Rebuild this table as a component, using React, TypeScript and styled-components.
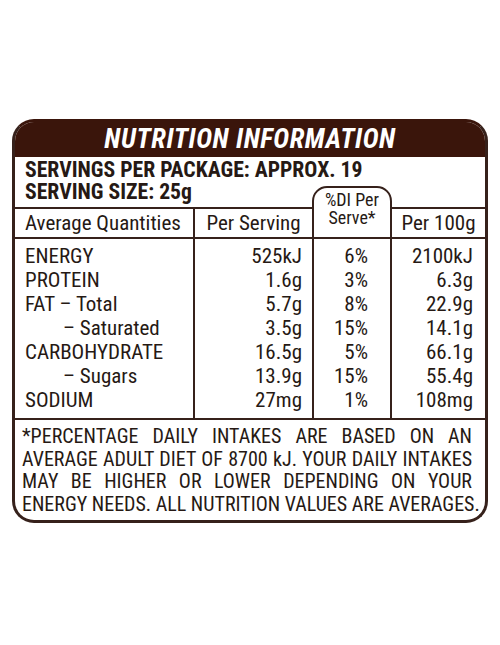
import React from "react";
import styled, { createGlobalStyle } from "styled-components";

const INK = "#261914";
const BROWN = "#3a150b";
const LINE = "#36211b";
const FONT = `Roboto, "Liberation Sans", sans-serif`;

type Nutrient = {
  name: string;
  sub?: boolean;
  serving: string;
  di: string;
  per100: string;
};

const rows: Nutrient[] = [
  { name: "ENERGY", serving: "525kJ", di: "6%", per100: "2100kJ" },
  { name: "PROTEIN", serving: "1.6g", di: "3%", per100: "6.3g" },
  { name: "FAT – Total", serving: "5.7g", di: "8%", per100: "22.9g" },
  { name: "– Saturated", sub: true, serving: "3.5g", di: "15%", per100: "14.1g" },
  { name: "CARBOHYDRATE", serving: "16.5g", di: "5%", per100: "66.1g" },
  { name: "– Sugars", sub: true, serving: "13.9g", di: "15%", per100: "55.4g" },
  { name: "SODIUM", serving: "27mg", di: "1%", per100: "108mg" },
];

const footnote = [
  "*PERCENTAGE DAILY INTAKES ARE BASED ON AN",
  "AVERAGE ADULT DIET OF 8700 kJ. YOUR DAILY INTAKES",
  "MAY BE HIGHER OR LOWER DEPENDING ON YOUR",
  "ENERGY NEEDS. ALL NUTRITION VALUES ARE AVERAGES.",
];

export default function App() {
  return (
    <>
      <GlobalStyle />
      <Page>
        <Label>
          <Header>NUTRITION INFORMATION</Header>
          <Table>
            <Servings>SERVINGS PER PACKAGE: APPROX. 19</Servings>
            <ServingSize>SERVING SIZE: 25g</ServingSize>
            <Bubble>
              <span>%DI Per</span>
              <span>Serve*</span>
            </Bubble>
            <Blank />
            <HeadCell>Average Quantities</HeadCell>
            <HeadCell $divider $center>
              Per Serving
            </HeadCell>
            <HeadCell $center>Per 100g</HeadCell>

            <DataCol>
              {rows.map((r) => (
                <Name key={r.name} $sub={r.sub}>
                  {r.name}
                </Name>
              ))}
            </DataCol>
            <DataCol $divider $pad={10}>
              {rows.map((r) => (
                <Value key={r.name}>{r.serving}</Value>
              ))}
            </DataCol>
            <DataCol $divider $right $pad={22}>
              {rows.map((r) => (
                <Value key={r.name}>{r.di}</Value>
              ))}
            </DataCol>
            <DataCol $pad={12}>
              {rows.map((r) => (
                <Value key={r.name}>{r.per100}</Value>
              ))}
            </DataCol>
          </Table>
          <Footnote>
            {footnote.map((line) => (
              <FootLine key={line}>{line}</FootLine>
            ))}
          </Footnote>
        </Label>
      </Page>
    </>
  );
}

const GlobalStyle = createGlobalStyle`
  html, body {
    margin: 0;
    padding: 0;
    background: #fff;
  }
  body {
    font-family: ${FONT};
    font-stretch: 75%;
    font-weight: 450;
    color: ${INK};
  }
`;

const Page = styled.div`
  width: 500px;
  height: 645px;
  padding: 119px 0 0 12px;
  box-sizing: border-box;
`;

const Label = styled.div`
  width: 476px;
  box-sizing: border-box;
  border: 3px solid ${LINE};
  border-top-color: ${BROWN};
  border-radius: 22px;
  overflow: hidden;
  background: #fff;
`;

const Header = styled.div`
  height: 35px;
  background: ${BROWN};
  color: #fff;
  font-weight: 700;
  font-style: italic;
  font-size: 27px;
  line-height: 34px;
  text-align: center;
  letter-spacing: 0.6px;
`;

const Table = styled.div`
  display: grid;
  grid-template-columns: 178px 119px 80px 93px;
  font-size: 21px;
`;

const Servings = styled.div`
  grid-column: 1 / 5;
  padding: 2px 0 0 10px;
  font-size: 21.7px;
  font-weight: 700;
  line-height: 22px;
  white-space: nowrap;
`;

const ServingSize = styled.div`
  grid-column: 1 / 3;
  padding: 0 0 4px 10px;
  font-size: 21.7px;
  font-weight: 700;
  line-height: 22px;
  border-bottom: 2px solid ${LINE};
`;

const Bubble = styled.div`
  grid-column: 3;
  grid-row: 2 / 4;
  display: flex;
  flex-direction: column;
  align-items: center;
  margin-top: 5px;
  padding-top: 3px;
  border: 2px solid ${LINE};
  border-radius: 15px 15px 0 0;
  font-size: 18px;
  line-height: 18px;
`;

const Blank = styled.div`
  grid-column: 4;
  border-bottom: 2px solid ${LINE};
`;

const HeadCell = styled.div<{ $divider?: boolean; $center?: boolean }>`
  height: 28px;
  line-height: 28px;
  padding-left: ${(p) => (p.$center ? 0 : 10)}px;
  text-align: ${(p) => (p.$center ? "center" : "left")};
  border-bottom: 2px solid ${LINE};
  border-left: ${(p) => (p.$divider ? `2px solid ${LINE}` : "none")};
  white-space: nowrap;
`;

const DataCol = styled.div<{ $divider?: boolean; $right?: boolean; $pad?: number }>`
  display: flex;
  flex-direction: column;
  align-items: ${(p) => (p.$pad ? "flex-end" : "flex-start")};
  padding: 5px ${(p) => p.$pad ?? 0}px 6px ${(p) => (p.$pad ? 0 : 10)}px;
  border-left: ${(p) => (p.$divider ? `2px solid ${LINE}` : "none")};
  border-right: ${(p) => (p.$right ? `2px solid ${LINE}` : "none")};
  border-bottom: 2px solid ${LINE};
`;

const Name = styled.div<{ $sub?: boolean }>`
  line-height: 24px;
  padding-left: ${(p) => (p.$sub ? 38 : 0)}px;
  white-space: nowrap;
`;

const Value = styled.div`
  line-height: 24px;
  white-space: nowrap;
`;

const Footnote = styled.div`
  padding: 5px 13px 5px 7px;
  font-size: 20px;
  line-height: 22.5px;
`;

const FootLine = styled.div`
  text-align: justify;
  text-align-last: justify;
  white-space: nowrap;
`;
